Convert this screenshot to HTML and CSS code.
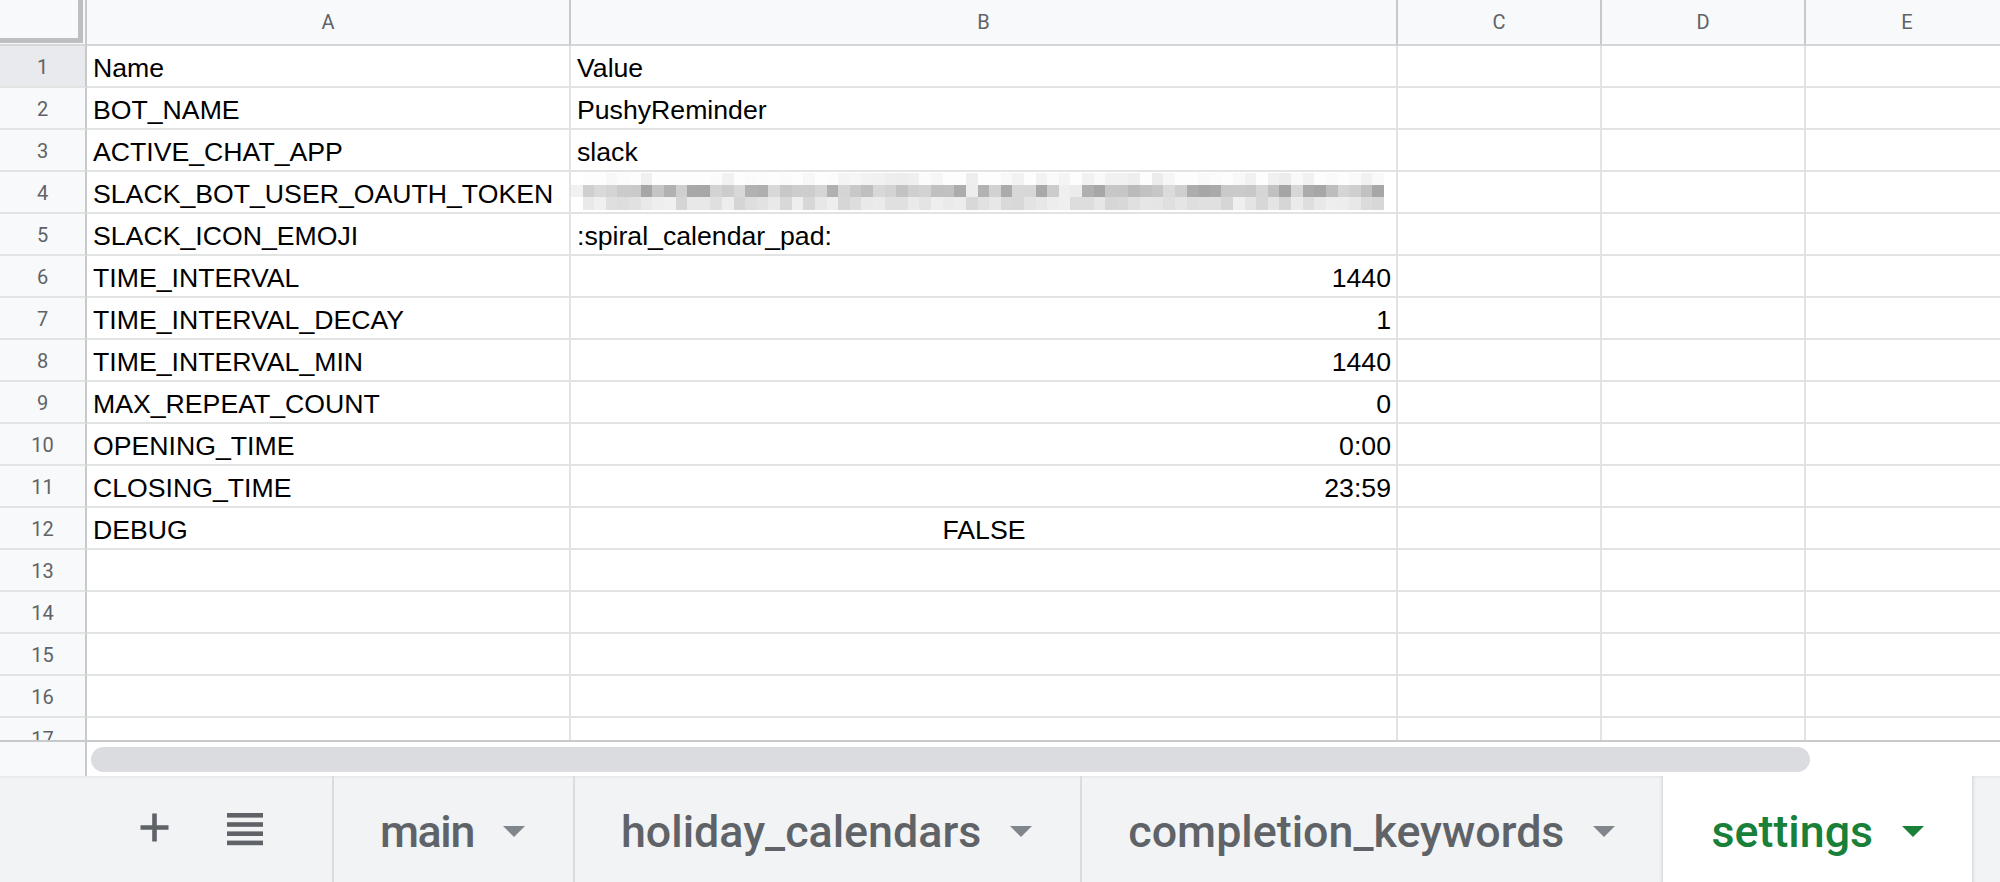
FILE: index.html
```html
<!DOCTYPE html>
<html>
<head>
<meta charset="utf-8">
<title>settings</title>
<link rel="stylesheet" href="styles.css">
</head>
<body>
<div class="grid">
  <div class="corner"><div class="freeze"></div></div>
  <div class="ch">A</div><div class="ch">B</div><div class="ch">C</div><div class="ch">D</div><div class="ch">E</div>

  <div class="rh sel">1</div><div class="c">Name</div><div class="c">Value</div><div class="c"></div><div class="c"></div><div class="c"></div>
  <div class="rh">2</div><div class="c">BOT_NAME</div><div class="c">PushyReminder</div><div class="c"></div><div class="c"></div><div class="c"></div>
  <div class="rh">3</div><div class="c">ACTIVE_CHAT_APP</div><div class="c">slack</div><div class="c"></div><div class="c"></div><div class="c"></div>
  <div class="rh">4</div><div class="c">SLACK_BOT_USER_OAUTH_TOKEN</div><div class="c redact-cell"><div id="redacted" class="redacted"></div></div><div class="c"></div><div class="c"></div><div class="c"></div>
  <div class="rh">5</div><div class="c">SLACK_ICON_EMOJI</div><div class="c">:spiral_calendar_pad:</div><div class="c"></div><div class="c"></div><div class="c"></div>
  <div class="rh">6</div><div class="c">TIME_INTERVAL</div><div class="c r">1440</div><div class="c"></div><div class="c"></div><div class="c"></div>
  <div class="rh">7</div><div class="c">TIME_INTERVAL_DECAY</div><div class="c r">1</div><div class="c"></div><div class="c"></div><div class="c"></div>
  <div class="rh">8</div><div class="c">TIME_INTERVAL_MIN</div><div class="c r">1440</div><div class="c"></div><div class="c"></div><div class="c"></div>
  <div class="rh">9</div><div class="c">MAX_REPEAT_COUNT</div><div class="c r">0</div><div class="c"></div><div class="c"></div><div class="c"></div>
  <div class="rh">10</div><div class="c">OPENING_TIME</div><div class="c r">0:00</div><div class="c"></div><div class="c"></div><div class="c"></div>
  <div class="rh">11</div><div class="c">CLOSING_TIME</div><div class="c r">23:59</div><div class="c"></div><div class="c"></div><div class="c"></div>
  <div class="rh">12</div><div class="c">DEBUG</div><div class="c m">FALSE</div><div class="c"></div><div class="c"></div><div class="c"></div>
  <div class="rh">13</div><div class="c"></div><div class="c"></div><div class="c"></div><div class="c"></div><div class="c"></div>
  <div class="rh">14</div><div class="c"></div><div class="c"></div><div class="c"></div><div class="c"></div><div class="c"></div>
  <div class="rh">15</div><div class="c"></div><div class="c"></div><div class="c"></div><div class="c"></div><div class="c"></div>
  <div class="rh">16</div><div class="c"></div><div class="c"></div><div class="c"></div><div class="c"></div><div class="c"></div>
  <div class="rh">17</div><div class="c"></div><div class="c"></div><div class="c"></div><div class="c"></div><div class="c"></div>
</div>

<div class="hscroll">
  <div class="hs-corner"></div>
  <div class="track"><div class="thumb"></div></div>
</div>

<div class="tabbar">
  <div class="tools">
    <svg class="icon-add" width="31" height="31" viewBox="0 0 31 31"><path d="M15.5 1.5v28M1.5 15.5h28" stroke="#5f6368" stroke-width="4.6" fill="none"/></svg>
    <svg class="icon-list" width="36" height="33" viewBox="0 0 36 33"><rect x="0" y="0" width="36" height="4.6" fill="#5f6368"/><rect x="0" y="9.2" width="36" height="4.6" fill="#5f6368"/><rect x="0" y="18.4" width="36" height="4.6" fill="#5f6368"/><rect x="0" y="27.6" width="36" height="4.6" fill="#5f6368"/></svg>
  </div>
  <div class="tab"><span class="tab-name tight">main</span><span class="arrow"></span></div>
  <div class="tab"><span class="tab-name">holiday_calendars</span><span class="arrow"></span></div>
  <div class="tab"><span class="tab-name">completion_keywords</span><span class="arrow"></span></div>
  <div class="tab active"><span class="tab-name">settings</span><span class="arrow"></span></div>
</div>
<script src="main.js"></script>
</body>
</html>
```

FILE: styles.css
```css
* { box-sizing: border-box; }
html, body { margin: 0; padding: 0; }
body {
  width: 2000px;
  height: 882px;
  overflow: hidden;
  background: #ffffff;
  font-family: "Liberation Sans", Arial, sans-serif;
}

.grid {
  display: grid;
  grid-template-columns: 87px 484px 827px 204px 204px 204px;
  grid-template-rows: 46px;
  grid-auto-rows: 42px;
  height: 742px;
  overflow: hidden;
  border-bottom: 2px solid #c7c9cc;
}

.corner {
  background: #f8f9fa;
  border-right: 2px solid #c7c9cc;
  border-bottom: 2px solid #d4d6d8;
}
.freeze {
  width: 83px;
  height: 43px;
  border-right: 5px solid #bdbfc2;
  border-bottom: 5px solid #bdbfc2;
}

.ch {
  background: #f8f9fa;
  border-right: 2px solid #c7c9cc;
  border-bottom: 2px solid #d4d6d8;
  color: #5f6368;
  font-family: Roboto, "Liberation Sans", sans-serif;
  font-size: 20px;
  line-height: 44px;
  text-align: center;
}

.rh {
  background: #f8f9fa;
  border-right: 2px solid #c7c9cc;
  border-bottom: 2px solid #e2e3e3;
  color: #5f6368;
  font-family: Roboto, "Liberation Sans", sans-serif;
  font-size: 20px;
  line-height: 42px;
  text-align: center;
}
.rh.sel { background: #e8eaed; }

.c {
  border-right: 2px solid #e2e3e3;
  border-bottom: 2px solid #e2e3e3;
  color: #000000;
  font-size: 26.67px;
  line-height: 44px;
  padding: 0 5px 0 6px;
  white-space: nowrap;
  overflow: hidden;
}
.c.r { text-align: right; }
.c.m { text-align: center; }
.c.redact-cell { padding: 1px 0 0 0; }
.redacted { width: 813px; height: 37px; }
.redacted svg { display: block; }

.hscroll {
  display: flex;
  height: 34px;
}
.hs-corner {
  width: 87px;
  flex: none;
  background: #f8f9fa;
  border-right: 2px solid #c7c9cc;
}
.track {
  flex: 1;
  padding: 5px 0 0 4px;
}
.thumb {
  width: 1719px;
  height: 25px;
  border-radius: 13px;
  background: #dadce0;
}

.tabbar {
  display: flex;
  height: 106px;
  overflow: hidden;
  background: #f1f3f4;
  box-shadow: inset 0 2px 0 #e8eaed;
}
.tools {
  width: 332px;
  flex: none;
  display: flex;
  align-items: center;
  padding-left: 139px;
  gap: 57px;
}
.icon-add { margin-top: -3px; }

.tab {
  flex: none;
  display: flex;
  align-items: center;
  gap: 29px;
  padding: 4px 48px 0 46px;
  border-left: 2px solid #dadce0;
  font-family: Roboto, "Liberation Sans", sans-serif;
  font-weight: 500;
  font-size: 44.8px;
  color: #5f6368;
  white-space: nowrap;
}
.tab-name.tight { letter-spacing: -1.4px; }
.arrow {
  width: 0;
  height: 0;
  border-left: 11px solid transparent;
  border-right: 11px solid transparent;
  border-top: 11px solid #80868b;
}
.tab.active {
  background: #ffffff;
  color: #188038;
  border-left-color: transparent;
  box-shadow: 0 1px 3px 1px rgba(60, 64, 67, 0.18);
}
.tab.active .arrow { border-top-color: #188038; }
```

FILE: main.js
```js
(function () {
  var host = document.getElementById('redacted');
  if (!host) return;
  var ns = 'http://www.w3.org/2000/svg';
  var svg = document.createElementNS(ns, 'svg');
  svg.setAttribute('width', '813');
  svg.setAttribute('height', '37');
  svg.setAttribute('shape-rendering', 'crispEdges');
  var seed = 12345;
  function rnd() { seed = (seed * 16807) % 2147483647; return (seed - 1) / 2147483646; }
  var cols = 70, bw = 813 / cols;
  var rows = [[0, 12, 236, 252], [12, 12, 186, 220], [24, 13, 212, 240]];
  for (var r = 0; r < rows.length; r++) {
    for (var c = 0; c < cols; c++) {
      var lo = rows[r][2], hi = rows[r][3];
      var v = Math.round(lo + rnd() * (hi - lo));
      if (r === 1) {
        var p = rnd();
        if (p < 0.13) v = 164 + Math.round(rnd() * 14);
        else if (p < 0.2) v = 232 + Math.round(rnd() * 10);
      }
      if (r === 0 && rnd() < 0.25) v = 253;
      if (c === 0) v = Math.min(255, v + 25);
      var rect = document.createElementNS(ns, 'rect');
      rect.setAttribute('x', (c * bw).toFixed(2));
      rect.setAttribute('y', rows[r][0]);
      rect.setAttribute('width', (bw + 0.5).toFixed(2));
      rect.setAttribute('height', rows[r][1]);
      rect.setAttribute('fill', 'rgb(' + v + ',' + v + ',' + v + ')');
      svg.appendChild(rect);
    }
  }
  host.appendChild(svg);
})();
```
